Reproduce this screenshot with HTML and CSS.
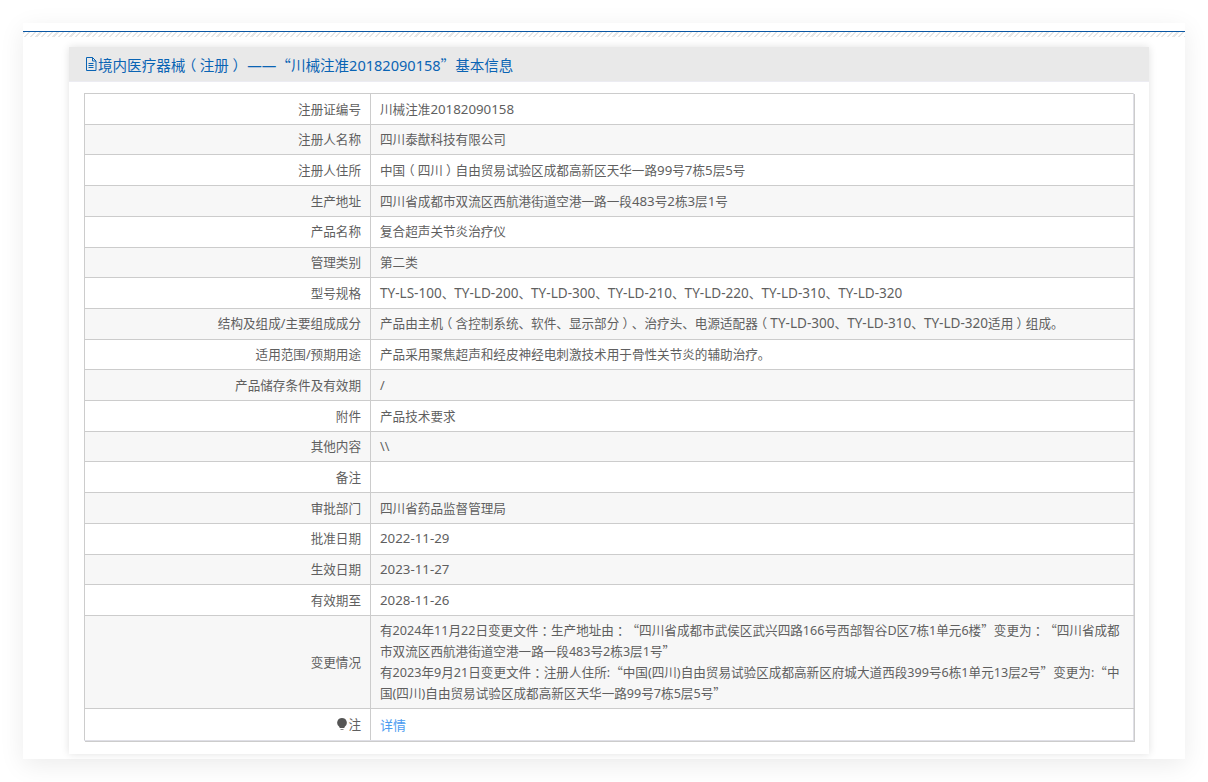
FILE: index.html
```html
<!DOCTYPE html>
<html lang="zh-CN">

<head>
    <meta charset="UTF-8">
    <title>境内医疗器械（注册）</title>
    <link rel="stylesheet" href="styles.css">
</head>

<body>

    <div class="page">
        <div class="top-line"></div>
        <div class="hatch"></div>

        <div class="panel">
            <div class="panel-title">
                <svg class="doc-icon" viewBox="0 0 12 14" width="12" height="14">
                    <path d="M1.500 .5h6l3.500 3.500v9.500h-9.500z M7.500 .5v3.500h3.500" fill="none" stroke="#0a64b4" stroke-width="1"/>
                    <path d="M3.500 6.500h5M3.500 8.500h5M3.500 10.500h5" fill="none" stroke="#0a64b4" stroke-width="1"/>
                </svg>
                <span>境内医疗器械<i>（</i>注册<i>）</i> ——<b class="q">“</b>川械注准20182090158<b class="q">”</b>基本信息</span>
            </div>

            <div class="panel-body">
                <table class="info">
                    <tr><th>注册证编号</th><td>川械注准<span class="lat">20182090158</span></td></tr>
                    <tr><th>注册人名称</th><td>四川泰猷科技有限公司</td></tr>
                    <tr><th>注册人住所</th><td>中国<i>（</i>四川<i>）</i>自由贸易试验区成都高新区天华一路<span class="lat">99</span>号<span class="lat">7</span>栋<span class="lat">5</span>层<span class="lat">5</span>号</td></tr>
                    <tr><th>生产地址</th><td>四川省成都市双流区西航港街道空港一路一段<span class="lat">483</span>号<span class="lat">2</span>栋<span class="lat">3</span>层<span class="lat">1</span>号</td></tr>
                    <tr><th>产品名称</th><td>复合超声关节炎治疗仪</td></tr>
                    <tr><th>管理类别</th><td>第二类</td></tr>
                    <tr><th>型号规格</th><td><span class="code">TY-LS-100</span>、<span class="code">TY-LD-200</span>、<span class="code">TY-LD-300</span>、<span class="code">TY-LD-210</span>、<span class="code">TY-LD-220</span>、<span class="code">TY-LD-310</span>、<span class="code">TY-LD-320</span></td></tr>
                    <tr><th>结构及组成/主要组成成分</th><td>产品由主机<i>（</i>含控制系统、软件、显示部分<i>）</i>、治疗头、电源适配器<i>（</i><span class="code">TY-LD-300</span>、<span class="code">TY-LD-310</span>、<span class="code">TY-LD-320</span>适用<i>）</i>组成。</td></tr>
                    <tr><th>适用范围/预期用途</th><td>产品采用聚焦超声和经皮神经电刺激技术用于骨性关节炎的辅助治疗。</td></tr>
                    <tr><th>产品储存条件及有效期</th><td>/</td></tr>
                    <tr><th>附件</th><td>产品技术要求</td></tr>
                    <tr><th>其他内容</th><td>\\</td></tr>
                    <tr><th>备注</th><td></td></tr>
                    <tr><th>审批部门</th><td>四川省药品监督管理局</td></tr>
                    <tr><th>批准日期</th><td><span class="lat">2022-11-29</span></td></tr>
                    <tr><th>生效日期</th><td><span class="lat">2023-11-27</span></td></tr>
                    <tr><th>有效期至</th><td><span class="lat">2028-11-26</span></td></tr>
                    <tr><th>变更情况</th><td>有2024年11月22日变更文件<i>：</i>生产地址由<i>：</i><b class="q">“</b>四川省成都市武侯区武兴四路166号西部智谷D区7栋1单元6楼<b class="q">”</b>变更为<i>：</i><b class="q">“</b>四川省成都市双流区西航港街道空港一路一段483号2栋3层1号<b class="q">”</b><br>有2023年9月21日变更文件<i>：</i>注册人住所:<b class="q">“</b>中国(四川)自由贸易试验区成都高新区府城大道西段399号6栋1单元13层2号<b class="q">”</b>变更为:<b class="q">“</b>中国(四川)自由贸易试验区成都高新区天华一路99号7栋5层5号<b class="q">”</b></td></tr>
                    <tr class="last"><th><svg class="bulb" viewBox="0 0 10 12" width="10" height="12"><path d="M5 0a4.800 4.800 0 0 1 2.800 8.700l-.6 1.300h-4.400l-.6-1.300a4.800 4.800 0 0 1 2.800-8.700z" fill="#555"/><path d="M3.500 11h3v1h-3z" fill="#888"/></svg>注</th><td><a href="#">详情</a></td></tr>
                </table>
            </div>
        </div>
    </div>

</body>

</html>
```

FILE: styles.css
```css
html, body {
    margin: 0;
    padding: 0;
}

body {
    background: #fff;
    font-family: "Noto Sans", "Noto Sans CJK SC", sans-serif;
    font-size: 12.600px;
    color: #5f5f5f;
    height: 782px;
    overflow: hidden;
    text-spacing-trim: space-all;
}

/* full-width punctuation sits centred in its box in the original font */
i {
    font-style: normal;
    font-feature-settings: "halt";
    padding: 0 0.25em;
    line-height: 0;
}

/* curly quotes take a full-width box, so they come from the CJK font */
.q {
    font-family: "Noto Sans CJK SC", sans-serif;
    font-weight: normal;
    line-height: 0;
}

/* latin runs are a bit larger than the CJK text around them */
.lat {
    font-size: 13.300px;
    line-height: 0;
}

.code {
    font-size: 13.550px;
    line-height: 0;
}

.page {
    margin: 23px 23px 0;
    width: 1162px;
    height: 736px;
    padding-top: 8px;
    box-sizing: border-box;
    background: #fff;
    box-shadow: 0 6px 24px rgba(0, 0, 0, 0.08);
}

.top-line {
    height: 1px;
    background: #0a57a4;
}

.hatch {
    height: 5px;
    background: repeating-linear-gradient(135deg, #e6e6e6 0, #e6e6e6 1.500px, #fff 1.500px, #fff 4px);
}

.panel {
    margin: 10px 36px 0 46px;
    height: 707px;
    background: #fff;
    box-shadow: 0 0 8px rgba(0, 0, 0, 0.12);
}

.panel-title {
    height: 35px;
    background: #e9e9e9;
    display: flex;
    align-items: center;
    padding-left: 16px;
    font-size: 14.550px;
    color: #0a64b4;
    border-bottom: 1px solid #ececf2;
    box-sizing: border-box;
}

.doc-icon {
    margin-right: 1px;
}

.panel-body {
    padding: 11px 14px 0 15px;
}

.info {
    width: 1050px;
    border-collapse: collapse;
    box-shadow: 1px 1px 0 #ccc;
}

.info th,
.info td {
    border: 1px solid #ccc;
    padding: 5.500px 9px 3.500px;
    line-height: 20.700px;
    font-weight: normal;
}

.info th {
    width: 267px;
    text-align: right;
}

.info td {
    text-align: left;
    border-right-color: #dfdfe6;
}

.info tr:nth-child(even) {
    background: #f7f7f7;
}

.last th,
.last td {
    border-bottom-color: #dfdfe6;
}

.last td {
    font-size: 13px;
    line-height: 22px;
}

.last a {
    color: #4b9bf0;
    text-decoration: none;
}

.bulb {
    vertical-align: -1px;
    margin-right: 1px;
}
```
